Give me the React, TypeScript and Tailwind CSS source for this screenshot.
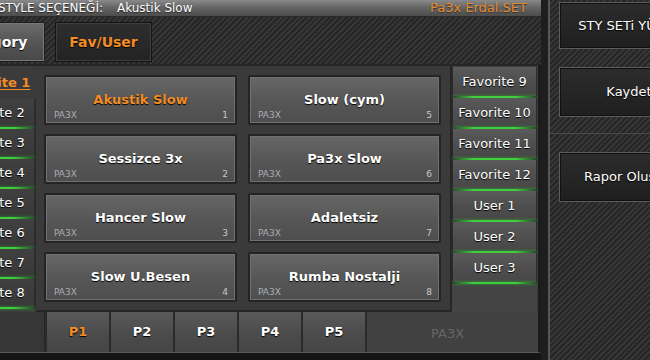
const stripes =
  "bg-[repeating-linear-gradient(135deg,#262626_0px,#262626_2px,#363636_2px,#363636_4px)]";

const styles = [
  { name: "Akustik Slow", no: 1, active: true },
  { name: "Sessizce 3x", no: 2 },
  { name: "Hancer Slow", no: 3 },
  { name: "Slow U.Besen", no: 4 },
  { name: "Slow (cym)", no: 5 },
  { name: "Pa3x Slow", no: 6 },
  { name: "Adaletsiz", no: 7 },
  { name: "Rumba Nostalji", no: 8 },
];

const leftList = ["Favorite 2", "Favorite 3", "Favorite 4", "Favorite 5", "Favorite 6", "Favorite 7", "Favorite 8"];
const rightList = ["Favorite 9", "Favorite 10", "Favorite 11", "Favorite 12", "User 1", "User 2", "User 3"];

function GreenLine() {
  return (
    <div className="h-[2px] w-full bg-[linear-gradient(90deg,#2a4a2a,#3fd03f_25%,#3fd03f_75%,#2a4a2a)] shadow-[0_0_3px_#2fa52f]" />
  );
}

function StyleButton({ name, no, active }: { name: string; no: number; active?: boolean }) {
  return (
    <div className="relative rounded-[2px] border-2 border-[#242424] bg-[linear-gradient(#676767,#575757_50%,#4e4e4e)] shadow-[inset_0_0_0_1px_#707070] flex items-center justify-center">
      <span
        className={`text-[13px] font-bold [text-shadow:0_1px_1px_#000] ${active ? "text-[#f28c24]" : "text-white"}`}
      >
        {name}
      </span>
      <span className="absolute left-[8px] bottom-[3px] text-[9px] leading-none text-[#a9adb3]">PA3X</span>
      <span className="absolute right-[7px] bottom-[3px] text-[9px] leading-none text-[#c8c8c8]">{no}</span>
    </div>
  );
}

function SideButton({ label }: { label: string }) {
  return (
    <div className="h-full w-[140px] border border-[#5c5c5c] bg-[linear-gradient(#2c2c2c,#1f1f1f)] shadow-[inset_0_0_0_1px_#111] flex items-center justify-center">
      <span className="text-[13px] text-white whitespace-nowrap [text-shadow:0_1px_1px_#000]">{label}</span>
    </div>
  );
}

export default function App() {
  return (
    <div className="w-[650px] h-[360px] overflow-hidden bg-[#151515] font-['DejaVu_Sans',sans-serif]">
      <div className="-ml-[62px] flex">
        {/* main panel */}
        <div className="w-[603px] shrink-0 flex flex-col">
          {/* title bar */}
          <div className="h-[17px] border-b border-[#2a2a2a] bg-[linear-gradient(#8a8a8a,#666_45%,#4c4c4c)] flex items-center justify-between pl-[60px] pr-[14px]">
            <div className="flex gap-[14px] text-[12px] text-white [text-shadow:0_1px_1px_#222]">
              <span>STYLE SEÇENEĞİ:</span>
              <span>Akustik Slow</span>
            </div>
            <span className="text-[13px] text-[#e88a2e] [text-shadow:0_1px_1px_#333]">Pa3x Erdal.SET</span>
          </div>

          {/* tabs */}
          <div className={`h-[47px] ${stripes} flex items-start gap-[10px] pt-[5px]`}>
            <div className="h-[40px] w-[107px] border border-[#1e1e1e] bg-[linear-gradient(#6c6c6c,#555_50%,#484848)] shadow-[inset_0_0_0_1px_#777] flex items-center justify-center">
              <span className="text-[14px] font-bold text-white [text-shadow:0_1px_1px_#000]">Category</span>
            </div>
            <div className="h-[40px] w-[97px] border border-[#141414] bg-[linear-gradient(#2e2e2e,#232323)] shadow-[inset_0_0_0_1px_#3e3e3e] flex items-center justify-center">
              <span className="text-[14px] font-bold text-[#f28c24] [text-shadow:0_1px_1px_#000]">Fav/User</span>
            </div>
          </div>

          {/* body */}
          <div className="h-[289px] border-t-2 border-r-[3px] border-b border-t-[#262626] border-r-[#1c1c1c] border-b-[#5a5a5a] bg-[#3b3b3b] flex flex-col">
            <div className="h-[246px] flex">
              {/* left list */}
              <div className="ml-[13px] w-[85px] flex flex-col">
                <div className="h-[33px] flex items-center justify-center">
                  <span className="text-[13px] font-bold text-[#f28c24] underline underline-offset-2">Favorite 1</span>
                </div>
                {leftList.map((f) => (
                  <div key={f} className="h-[30px] flex flex-col border-r-2 border-[#2c2c2c] bg-[linear-gradient(#404040,#383838)]">
                    <div className="flex-1 flex items-center justify-center text-[13px] text-white [text-shadow:0_1px_1px_#000]">
                      {f}
                    </div>
                    <GreenLine />
                  </div>
                ))}
              </div>

              {/* style grid */}
              <div className="w-[416px] border-r-2 border-b-2 border-[#262626] bg-[#3a3a3a] pl-[8px] pt-[9px]">
                <div className="grid grid-flow-col grid-cols-[193px_193px] grid-rows-[repeat(4,50px)] gap-x-[11px] gap-y-[9px]">
                  {styles.map((s) => (
                    <StyleButton key={s.no} name={s.name} no={s.no} active={s.active} />
                  ))}
                </div>
              </div>

              {/* right list */}
              <div className="w-[85px] bg-[#444] pt-[1px] flex flex-col">
                {rightList.map((f) => (
                  <div key={f} className="h-[31px] flex flex-col border-x border-[#2c2c2c] bg-[linear-gradient(#5a5a5a,#4e4e4e_50%,#464646)]">
                    <div className="flex-1 flex items-center justify-center text-[13px] text-white [text-shadow:0_1px_1px_#000]">
                      {f}
                    </div>
                    <GreenLine />
                  </div>
                ))}
              </div>
            </div>

            {/* page tabs */}
            <div className="flex-1 flex bg-[#414141]">
              <div className="w-[107px] border-r border-[#262626] bg-[#363636]" />
              {["P1", "P2", "P3", "P4", "P5"].map((p, i) => (
                <div
                  key={p}
                  className="w-[64px] border-l-2 border-[#2b2b2b] bg-[linear-gradient(#5a5a5a,#4c4c4c_50%,#454545)] flex items-center justify-center"
                >
                  <span
                    className={`text-[13px] font-bold [text-shadow:0_1px_1px_#000] ${i === 0 ? "text-[#f28c24]" : "text-white"}`}
                  >
                    {p}
                  </span>
                </div>
              ))}
              <div className="flex-1 border-l-2 border-[#2b2b2b] flex items-center pl-[64px] pt-[4px]">
                <span className="text-[13px] text-[#666]">PA3X</span>
              </div>
            </div>
          </div>
        </div>

        {/* side panel */}
        <div className="w-[200px] shrink-0 h-[360px] bg-[#1e1e1e] pl-[7px] flex">
          <div className={`flex-1 border-l-2 border-[#565656] ${stripes} pl-[9px] pt-[2px] flex flex-col`}>
            <div className="h-[47px]">
              <SideButton label="STY  SETi YÜKLE" />
            </div>
            <div className="h-[50px] mt-[18px]">
              <SideButton label="Kaydet" />
            </div>
            <div className="mt-[16px] -ml-[9px] h-px bg-[#4a4a4a]" />
            <div className="h-[50px] mt-[18px]">
              <SideButton label="Rapor Oluştur" />
            </div>
          </div>
        </div>
      </div>
    </div>
  );
}
